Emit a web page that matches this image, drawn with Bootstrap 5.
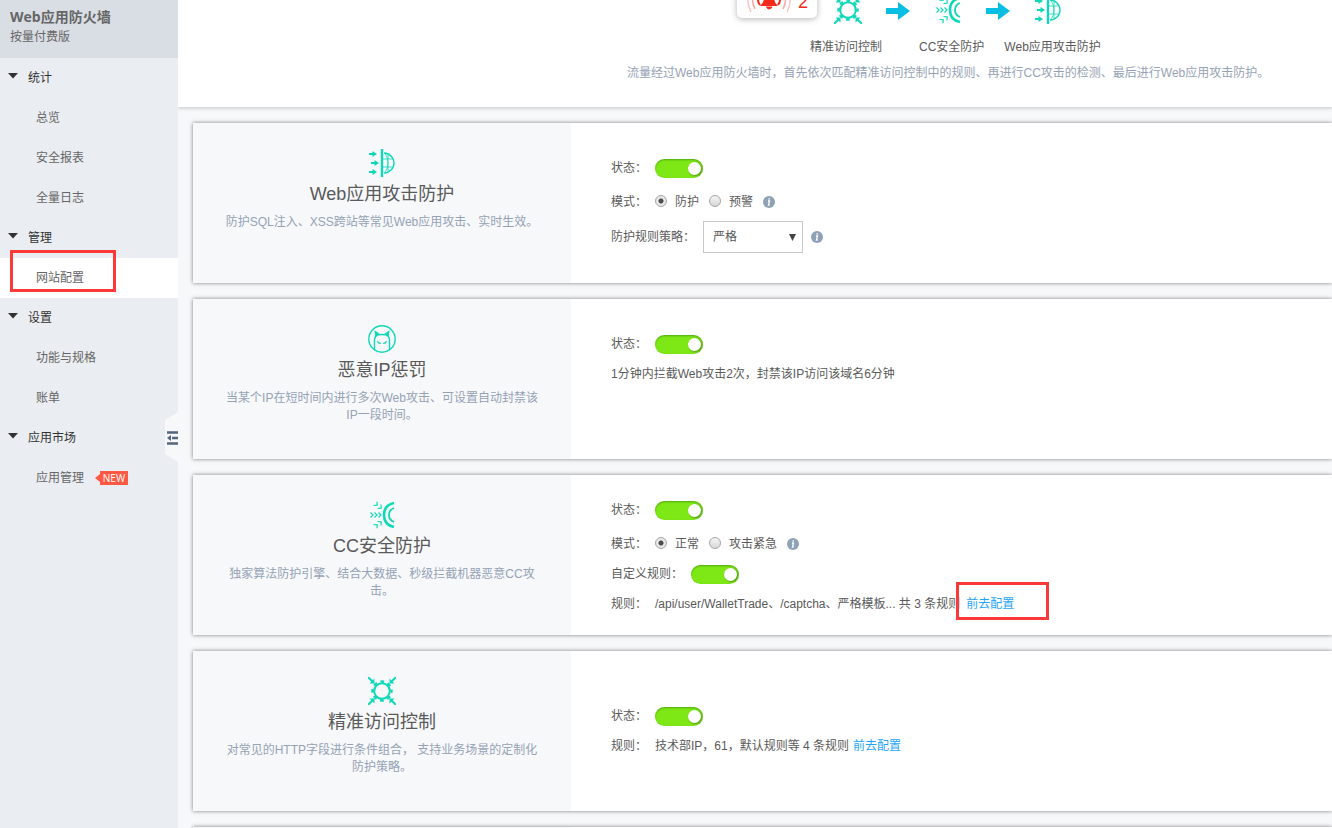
<!DOCTYPE html>
<html lang="zh-CN">
<head>
<meta charset="utf-8">
<meta name="viewport" content="width=device-width, initial-scale=1">
<title>Web应用防火墙</title>
<link rel="stylesheet" href="https://cdn.jsdelivr.net/npm/bootstrap@5.3.0/dist/css/bootstrap.min.css">
<style>
  body { font-family: "Liberation Sans", "Noto Sans CJK SC", sans-serif; font-size: 12px; line-height: 18px; color: #5a5a5a; background: #f7f8fa; }
  a { color: #1ea5fa; text-decoration: none; }
  .teal { color: #0fd8b8; }
  /* Sidebar */
  .side { width: 178px; background: #eaedf1; font-family: "Open Sans", "Noto Sans CJK SC", sans-serif; }
  .side-head { background: #d9dde4; height: 58px; padding: 7px 10px; line-height: 20px; color: #666; }
  .side-head h1 { font-size: 14px; line-height: 20px; }
  .side-group { height: 40px; padding: 0 8px; color: #333; font-size: 12px; border: 0; background: none; text-align: left; gap: 10px; }
  .side .nav-link { height: 40px; line-height: 40px; padding: 0 0 0 36px; color: #666; }
  .side .nav-link.active { background: #fff; }
  .tag-new { height: 14px; margin-left: 11px; font-size: 10px; line-height: 14px; color: #fff; }
  .tag-new b { font-weight: 400; background: #ff5843; width: 28px; text-align: center; }
  .tag-new i { border: solid transparent; border-width: 4px 5px 4px 0; border-right-color: #ff5843; }
  .fold { right: 0; top: 412px; width: 13px; height: 50px; padding: 0; border: 0; background: #f7f8fa; clip-path: polygon(0 16%, 100% 0, 100% 100%, 0 84%); }
  .mark-box { border: 3px solid #fb3939; pointer-events: none; }
  .mark-nav { left: 10px; top: -8px; width: 106px; height: 42px; }
  .mark-link { left: -10px; top: -13px; width: 93px; height: 38px; }
  /* Pipeline overview */
  .overview { background: #fff; height: 107px; padding-left: 449px; box-shadow: 0 1px 4px rgba(0,0,0,.22); white-space: nowrap; }
  .steps { height: 38px; margin-left: 110px; padding-bottom: 14px; }
  .alarm { width: 80px; height: 32px; margin: 0 17px 6px 0; padding: 0 9px 4px; border-radius: 5px; box-shadow: 0 1px 6px rgba(0,0,0,.3); color: #f42a1c; font-size: 18px; line-height: 24px; }
  .step-names { margin-left: 183px; }
  .step-acl { margin-right: 37px; }
  .step-cc { margin-right: 20px; }
  .overview p, .about p { color: #95a2b5; }
  /* Feature cards */
  .features { padding: 16px 0 0 15px; gap: 16px; }
  .feature { min-height: 160px; background: #fff; box-shadow: 0 0 4px rgba(0,0,0,.5); flex: none; }
  .about { width: 378px; flex: none; background: #f7f8fa; padding: 26px 32px 0; text-align: center; }
  .about h2 { font-size: 18px; line-height: 34px; margin: 0 0 3px; font-weight: 400; color: #5a5a5a; }
  .about p { line-height: 17px; margin: 0; }
  .opts { padding-left: 40px; white-space: nowrap; }
  .opts-top { padding-top: 30px; }
  .opt { height: 30px; }
  .opt-tall { height: 38px; }
  .opt-tight { height: 22px; }
  .lead-in { width: 44px; }
  .lead-wide { width: 80px; }
  .lead-select { width: 92px; }
  .rule-text { margin-right: 6px; }
  .sw { appearance: none; width: 48px; height: 19px; margin: 0; border-radius: 10px; background: #7ee817; box-shadow: inset 0 1px 2px rgba(40,110,0,.5); position: relative; }
  .sw::after { content: ""; position: absolute; right: 2px; top: 3px; width: 13px; height: 13px; border-radius: 50%; background: #fff; box-shadow: 1px 1px 2px rgba(0,0,0,.35); }
  .rd { appearance: none; width: 12px; height: 12px; margin: 0 8px 2px 0; border: 1px solid #a5a5a5; border-radius: 50%; background: linear-gradient(#f4f4f4, #d8d8d8); }
  .rd:checked { background: radial-gradient(circle, #4b4b4b 0 2px, #e8e8e8 3px); }
  .rd + label { margin-right: 10px; }
  .info { width: 12px; height: 12px; }
  .level { width: 100px; height: 32px; padding: 0 9px; border: 1px solid #c8c8c8; border-radius: 0; font-size: 12px; color: #555; appearance: none;
    background: #fff url("data:image/svg+xml,%3Csvg xmlns='http://www.w3.org/2000/svg' width='7' height='7'%3E%3Cpath d='M0 0h7L3.500 7z' fill='%23444'/%3E%3C/svg%3E") no-repeat right 6px center; }
</style>
</head>
<body>
<svg width="0" height="0" class="position-absolute" aria-hidden="true">
  <defs>
    <symbol id="i-web" viewBox="0 0 28 28" fill="none" stroke="currentColor">
      <path d="M14 0v28" stroke-width="2.400"/>
      <path d="M16 4a10 10 0 0 1 0 20" stroke-width="1.400"/>
      <path d="M17 4q6 10 0 20M15 10h10M15 18h10M20 5v18" stroke-width=".8"/>
      <path d="M1 5h5M3 14h5M1 23h5" stroke-width="1.800"/>
      <path d="M4.500 2l4.500 3-4.500 3zM6.500 11l4.500 3-4.500 3zM4.500 20l4.500 3-4.500 3z" fill="currentColor" stroke="none"/>
    </symbol>
    <symbol id="i-ip" viewBox="0 0 28 28" fill="none" stroke="currentColor" stroke-width="1.400">
      <circle cx="14" cy="14" r="13.200"/>
      <path d="M6.500 25V15q0-2 1.500-4l-.5-4 4 2.800q2.500-.6 5 0l4-2.800-.5 4q1.500 2 1.500 4v10"/>
      <path d="M8 11l-.5-4 3.500 2.500zM20 11l.5-4-3.500 2.500z" fill="currentColor"/>
      <path d="M9 16l4 2.500q-3 1-4-2.500zM19 16l-4 2.500q3 1 4-2.500z" fill="currentColor" stroke-width=".5"/>
    </symbol>
    <symbol id="i-cc" viewBox="0 0 28 28" fill="none" stroke="currentColor">
      <path d="M26 2q-10 2-10 12t10 12" stroke-width="2.600"/>
      <path d="M26 7q-5 2-5 7t5 7" stroke-width="1.800"/>
      <path d="M2.500 11.500l2.500 2.500-2.500 2.500M6.500 11.500l2.500 2.500-2.500 2.500M10.500 11.500l2.500 2.500-2.500 2.500M5.500 4.500l3.700-.3-.2-3.500M9.500 7.500l3.700-.3-.2-3.700M5.500 23.500l3.700.3-.2 3.500M9.500 20.500l3.700.3-.2 3.700" stroke-width="1.200"/>
    </symbol>
    <symbol id="i-acl" viewBox="0 0 28 28" fill="none" stroke="currentColor">
      <circle cx="14" cy="14" r="7.800" stroke-width="2"/>
      <circle cx="14" cy="14" r="9.500" stroke-width="2.400" stroke-dasharray="3.800 3.661" stroke-dashoffset="1.900"/>
      <path d="M0 0l5 5M28 0l-5 5M0 28l5-5M28 28l-5-5" stroke-width="2"/>
      <path d="M6.500 1.500v5h-5zM21.500 1.500v5h5zM6.500 26.500v-5h-5zM21.500 26.500v-5h5z" fill="currentColor" stroke="none"/>
    </symbol>
    <symbol id="i-arrow" viewBox="0 0 24 18"><path d="M0 6h12V0l12 9-12 9v-6H0z" fill="#06bfe3"/></symbol>
    <symbol id="i-info" viewBox="0 0 12 12"><circle cx="6" cy="6" r="6" fill="#8fa1b5"/><path d="M5 5h1.500l-1 4h1.200M6.300 2.200l-.2 1.400" stroke="#fff" stroke-width="1.300" fill="none"/></symbol>
    <symbol id="i-caret" viewBox="0 0 10 6"><path d="M0 0h10L5 5.500z" fill="#333"/></symbol>
  </defs>
</svg>
<div class="d-flex vh-100 overflow-hidden">
  <aside class="side flex-shrink-0 position-relative">
    <header class="side-head">
      <h1 class="fw-bold m-0">Web应用防火墙</h1>
      <div>按量付费版</div>
    </header>
    <nav class="nav flex-column">
      <button class="side-group d-flex align-items-center"><svg width="10" height="6" class="mb-1"><use href="#i-caret"/></svg>统计</button>
      <a class="nav-link" href="#">总览</a>
      <a class="nav-link" href="#">安全报表</a>
      <a class="nav-link" href="#">全量日志</a>
      <button class="side-group d-flex align-items-center"><svg width="10" height="6" class="mb-1"><use href="#i-caret"/></svg>管理</button>
      <a class="nav-link active position-relative" href="#">网站配置<span class="mark-box mark-nav position-absolute"></span></a>
      <button class="side-group d-flex align-items-center"><svg width="10" height="6" class="mb-1"><use href="#i-caret"/></svg>设置</button>
      <a class="nav-link" href="#">功能与规格</a>
      <a class="nav-link" href="#">账单</a>
      <button class="side-group d-flex align-items-center"><svg width="10" height="6" class="mb-1"><use href="#i-caret"/></svg>应用市场</button>
      <a class="nav-link d-flex align-items-center" href="#">应用管理<span class="tag-new d-flex align-items-center"><i></i><b>NEW</b></span></a>
    </nav>
    <button class="fold position-absolute" aria-label="收起">
      <svg width="13" height="50" class="d-block"><path d="M2 20.500h11M7 26h6M2 31.500h11" stroke="#55647a" stroke-width="2.600"/><path d="M6 23v6l-4-3z" fill="#55647a"/></svg>
    </button>
  </aside>

  <main class="flex-grow-1 overflow-hidden d-flex flex-column">
    <section class="overview flex-shrink-0">
      <div class="steps d-flex align-items-end teal">
        <div class="alarm d-flex align-items-end justify-content-between">
          <svg width="46" height="30" viewBox="0 0 46 30" fill="none" stroke="#f42a1c"><path d="M14 22q4-3 4-9 0-6 5-6t5 6q0 6 4 9z" fill="#f42a1c" stroke="none"/><path d="M20 23h6q-1 2-3 2t-2-2" fill="#f42a1c"/><path d="M14 11q-4 5 0 10M32 11q4 5 0 10" stroke-width="2"/><path d="M9 7q-5 9 0 18M37 7q5 9 0 18" stroke="#f9a7a2" stroke-width="1.500"/><path d="M4 5q-5 11 1 23M42 5q5 11-1 23" stroke="#fbc4c1" stroke-width="1.500"/></svg>
          <span>2</span>
        </div>
        <div class="d-flex align-items-end gap-4">
          <svg width="28" height="28"><use href="#i-acl"/></svg>
          <svg width="24" height="18" class="mb-1"><use href="#i-arrow"/></svg>
          <svg width="28" height="28"><use href="#i-cc"/></svg>
          <svg width="24" height="18" class="mb-1"><use href="#i-arrow"/></svg>
          <svg width="28" height="28"><use href="#i-web"/></svg>
        </div>
      </div>
      <div class="step-names d-flex"><span class="step-acl">精准访问控制</span><span class="step-cc">CC安全防护</span><span>Web应用攻击防护</span></div>
      <p class="mt-2 mb-0">流量经过Web应用防火墙时，首先依次匹配精准访问控制中的规则、再进行CC攻击的检测、最后进行Web应用攻击防护。</p>
    </section>

    <div class="features d-flex flex-column">
      <section class="feature d-flex">
        <div class="about">
          <svg width="28" height="28" class="teal d-block mx-auto"><use href="#i-web"/></svg>
          <h2>Web应用攻击防护</h2>
          <p>防护SQL注入、XSS跨站等常见Web应用攻击、实时生效。</p>
        </div>
        <div class="opts opts-top d-flex flex-column">
          <div class="opt d-flex align-items-center"><label class="lead-in" for="s1">状态：</label><input id="s1" class="sw" type="checkbox" role="switch" checked></div>
          <div class="opt opt-tall d-flex align-items-center"><span class="lead-in">模式：</span><input class="rd" type="radio" name="m1" id="m1a" checked><label for="m1a">防护</label><input class="rd" type="radio" name="m1" id="m1b"><label for="m1b">预警</label><svg class="info"><use href="#i-info"/></svg></div>
          <div class="opt opt-tall d-flex align-items-start"><div class="d-flex align-items-center"><label class="lead-select" for="lv">防护规则策略：</label><select id="lv" class="level me-2"><option>严格</option></select><svg class="info"><use href="#i-info"/></svg></div></div>
        </div>
      </section>

      <section class="feature d-flex">
        <div class="about">
          <svg width="28" height="28" class="teal d-block mx-auto"><use href="#i-ip"/></svg>
          <h2>恶意IP惩罚</h2>
          <p>当某个IP在短时间内进行多次Web攻击、可设置自动封禁该IP一段时间。</p>
        </div>
        <div class="opts opts-top d-flex flex-column">
          <div class="opt d-flex align-items-center"><label class="lead-in" for="s2">状态：</label><input id="s2" class="sw" type="checkbox" role="switch" checked></div>
          <div class="opt d-flex align-items-center">1分钟内拦截Web攻击2次，封禁该IP访问该域名6分钟</div>
        </div>
      </section>

      <section class="feature d-flex">
        <div class="about">
          <svg width="28" height="28" class="teal d-block mx-auto"><use href="#i-cc"/></svg>
          <h2>CC安全防护</h2>
          <p>独家算法防护引擎、结合大数据、秒级拦截机器恶意CC攻击。</p>
        </div>
        <div class="opts d-flex flex-column justify-content-center pt-2">
          <div class="opt d-flex align-items-center"><label class="lead-in" for="s3">状态：</label><input id="s3" class="sw" type="checkbox" role="switch" checked></div>
          <div class="opt opt-tall d-flex align-items-center"><span class="lead-in">模式：</span><input class="rd" type="radio" name="m3" id="m3a" checked><label for="m3a">正常</label><input class="rd" type="radio" name="m3" id="m3b"><label for="m3b">攻击紧急</label><svg class="info"><use href="#i-info"/></svg></div>
          <div class="opt opt-tight d-flex align-items-center"><label class="lead-wide" for="s4">自定义规则：</label><input id="s4" class="sw" type="checkbox" role="switch" checked></div>
          <div class="opt opt-tall d-flex align-items-center"><span class="lead-in">规则：</span><span class="rule-text">/api/user/WalletTrade、/captcha、严格模板... 共 3 条规则</span><a class="position-relative" href="#">前去配置<span class="mark-box mark-link position-absolute"></span></a></div>
        </div>
      </section>

      <section class="feature d-flex">
        <div class="about">
          <svg width="28" height="28" class="teal d-block mx-auto"><use href="#i-acl"/></svg>
          <h2>精准访问控制</h2>
          <p>对常见的HTTP字段进行条件组合， 支持业务场景的定制化防护策略。</p>
        </div>
        <div class="opts d-flex flex-column justify-content-center">
          <div class="opt d-flex align-items-center"><label class="lead-in" for="s5">状态：</label><input id="s5" class="sw" type="checkbox" role="switch" checked></div>
          <div class="opt d-flex align-items-center"><span class="lead-in">规则：</span><span class="me-1">技术部IP，61，默认规则等 4 条规则</span><a href="#">前去配置</a></div>
        </div>
      </section>

      <section class="feature d-flex"><div class="about"></div></section>
    </div>
  </main>
</div>
<script src="https://cdn.jsdelivr.net/npm/bootstrap@5.3.0/dist/js/bootstrap.bundle.min.js"></script>
</body>
</html>
